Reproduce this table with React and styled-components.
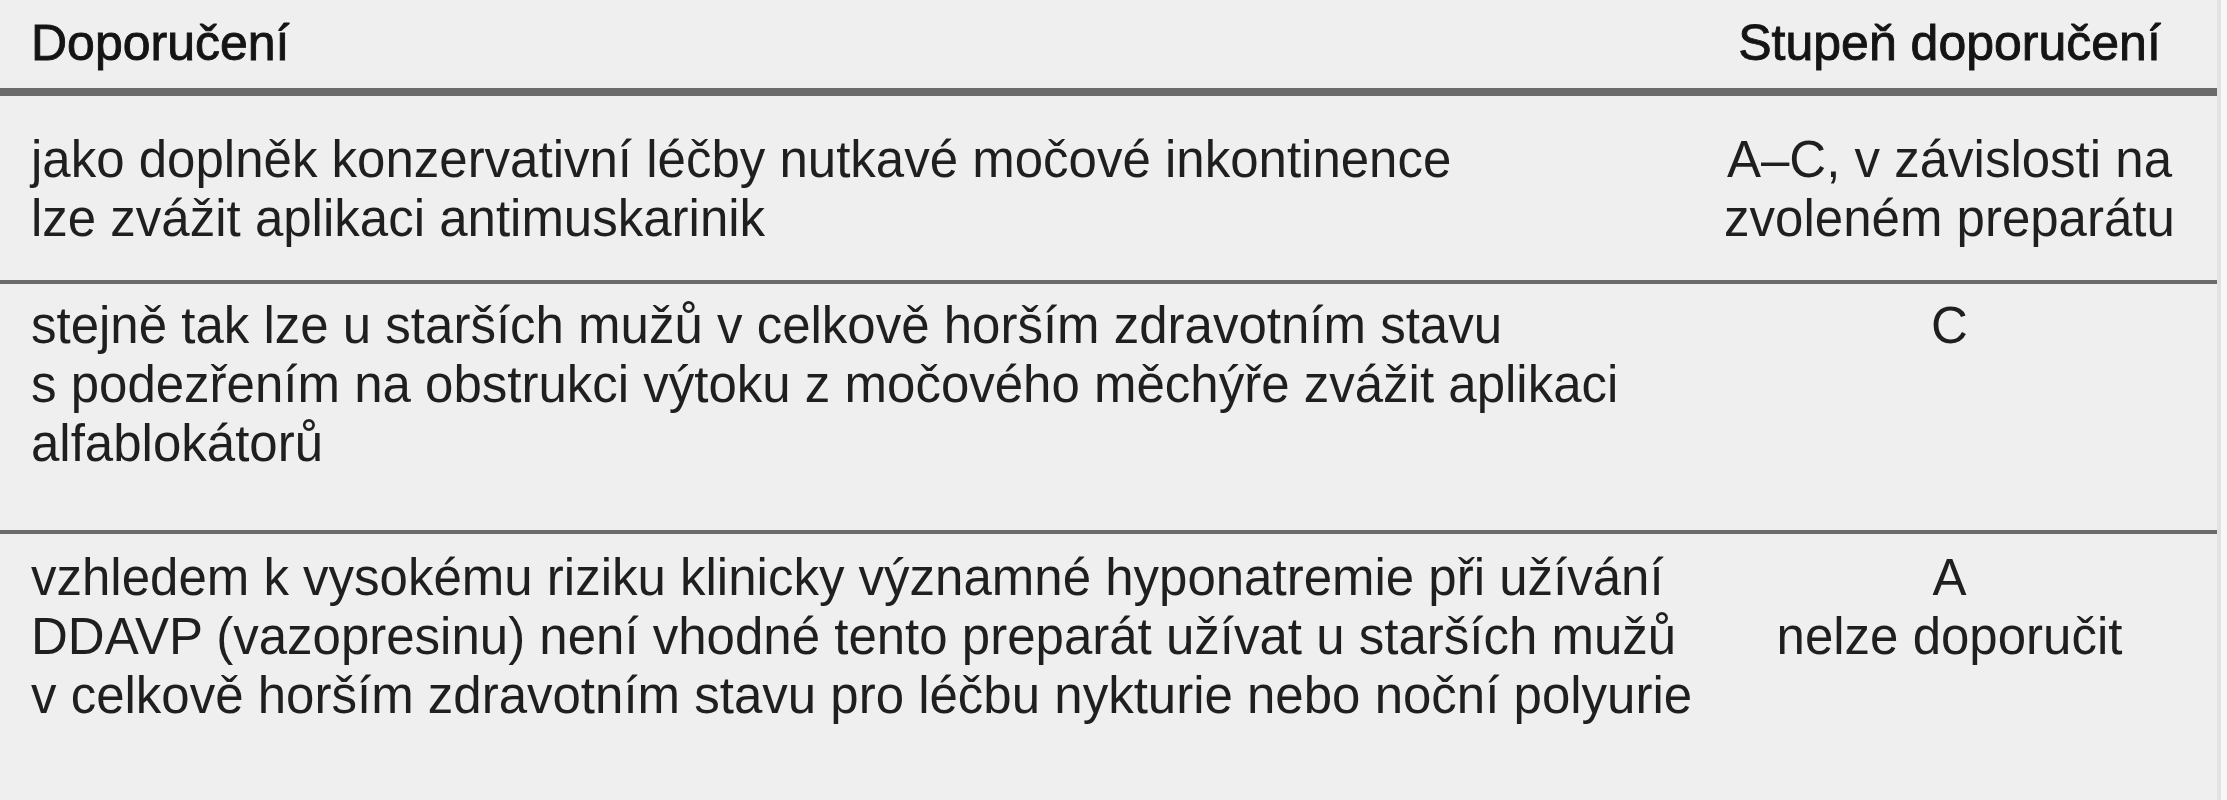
import React from 'react'
import styled, { createGlobalStyle } from 'styled-components'

const GlobalStyle = createGlobalStyle`
    html, body {
        margin: 0;
        padding: 0;
        background: #f7f7f7;
    }
    #root {
        height: 800px;
        overflow: hidden;
    }
`

const Table = styled.div`
    width: 2217px;
    height: 800px;
    background: #efefef;
    border-right: 4px solid #e2e2e2;
    font-family: "Liberation Sans", Arial, sans-serif;
    font-size: 51px;
    line-height: 59px;
    color: #1f1f1f;
`

const Row = styled.div`
    display: grid;
    grid-template-columns: minmax(0, 1fr) 535px;
    height: ${props => props.$height}px;
    padding-top: ${props => props.$top}px;
    box-sizing: border-box;
    border-bottom: ${props => props.$rule}px solid #6b6b6b;
`

const Cell = styled.div`
    padding-left: ${props => props.$center ? 0 : 31}px;
    text-align: ${props => props.$center ? 'center' : 'left'};
    white-space: nowrap;
`

const HeadCell = styled(Cell)`
    font-size: 50px;
    color: #141414;
    -webkit-text-stroke: 0.9px #141414;
`

const rows = [
    {
        height: 188,
        top: 34,
        text: [
            'jako doplněk konzervativní léčby nutkavé močové inkontinence',
            'lze zvážit aplikaci antimuskarinik',
        ],
        grade: ['A–C, v závislosti na', 'zvoleném preparátu'],
    },
    {
        height: 250,
        top: 12,
        text: [
            'stejně tak lze u starších mužů v celkově horším zdravotním stavu',
            's podezřením na obstrukci výtoku z močového měchýře zvážit aplikaci',
            'alfablokátorů',
        ],
        grade: ['C'],
    },
    {
        height: 266,
        top: 14,
        rule: 0,
        text: [
            'vzhledem k vysokému riziku klinicky významné hyponatremie při užívání',
            'DDAVP (vazopresinu) není vhodné tento preparát užívat u starších mužů',
            'v celkově horším zdravotním stavu pro léčbu nykturie nebo noční polyurie',
        ],
        grade: ['A', 'nelze doporučit'],
    },
]

const Lines = ({ items }) => items.map((line, i) => <div key={i}>{line}</div>)

const App = () => {
    return (
        <>
            <GlobalStyle />
            <Table>
                <Row $height={96} $top={14} $rule={8}>
                    <HeadCell>Doporučení</HeadCell>
                    <HeadCell $center>Stupeň doporučení</HeadCell>
                </Row>
                {rows.map((row, i) => (
                    <Row key={i} $height={row.height} $top={row.top} $rule={row.rule ?? 4}>
                        <Cell><Lines items={row.text} /></Cell>
                        <Cell $center><Lines items={row.grade} /></Cell>
                    </Row>
                ))}
            </Table>
        </>
    )
}

export default App
